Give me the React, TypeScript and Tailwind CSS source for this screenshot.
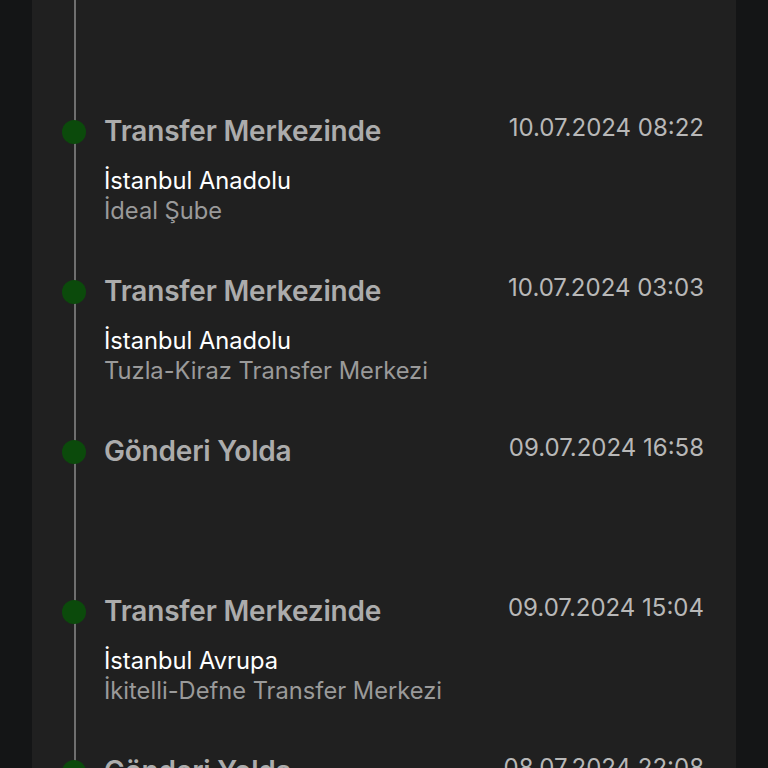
import React from 'react';

type Step = {
  title: string;
  date: string;
  city?: string;
  place?: string;
};

const steps: Step[] = [
  { title: 'Transfer Merkezinde', date: '10.07.2024 08:22', city: 'İstanbul Anadolu', place: 'İdeal Şube' },
  { title: 'Transfer Merkezinde', date: '10.07.2024 03:03', city: 'İstanbul Anadolu', place: 'Tuzla-Kiraz Transfer Merkezi' },
  { title: 'Gönderi Yolda', date: '09.07.2024 16:58' },
  { title: 'Transfer Merkezinde', date: '09.07.2024 15:04', city: 'İstanbul Avrupa', place: 'İkitelli-Defne Transfer Merkezi' },
  { title: 'Gönderi Yolda', date: '08.07.2024 22:08' },
];

const App: React.FC = () => {
  return (
    <div className="h-[768px] w-full overflow-hidden bg-[#141516] px-8 font-['Inter',sans-serif]">
      <div className="relative h-full bg-[#202020] pl-[30px] pr-[32px] pt-[115px]">
        {/* timeline rail */}
        <div className="absolute left-[42px] top-0 bottom-0 w-[2px] bg-[#6f6f6f]" />

        {steps.map((s, i) => (
          <div key={i} className="relative flex h-[160px] items-start">
            <div className="relative z-10 mt-[5px] h-6 w-6 shrink-0 rounded-full bg-[#0b4a0b]" />
            <div className="ml-[18px] flex-1">
              <div className="flex items-start justify-between">
                <div className="text-[28px] font-semibold leading-8 tracking-[-0.2px] text-[#acacac]">{s.title}</div>
                <div className="mt-[-3px] text-[24px] leading-8 text-[#b8b8b8]">{s.date}</div>
              </div>
              {s.city && (
                <div className="mt-[19px] text-[23.7px] leading-[30px] text-white">{s.city}</div>
              )}
              {s.place && (
                <div className="text-[23.7px] leading-[30px] text-[#9a9a9a]">{s.place}</div>
              )}
            </div>
          </div>
        ))}
      </div>
    </div>
  );
};

export default App;
